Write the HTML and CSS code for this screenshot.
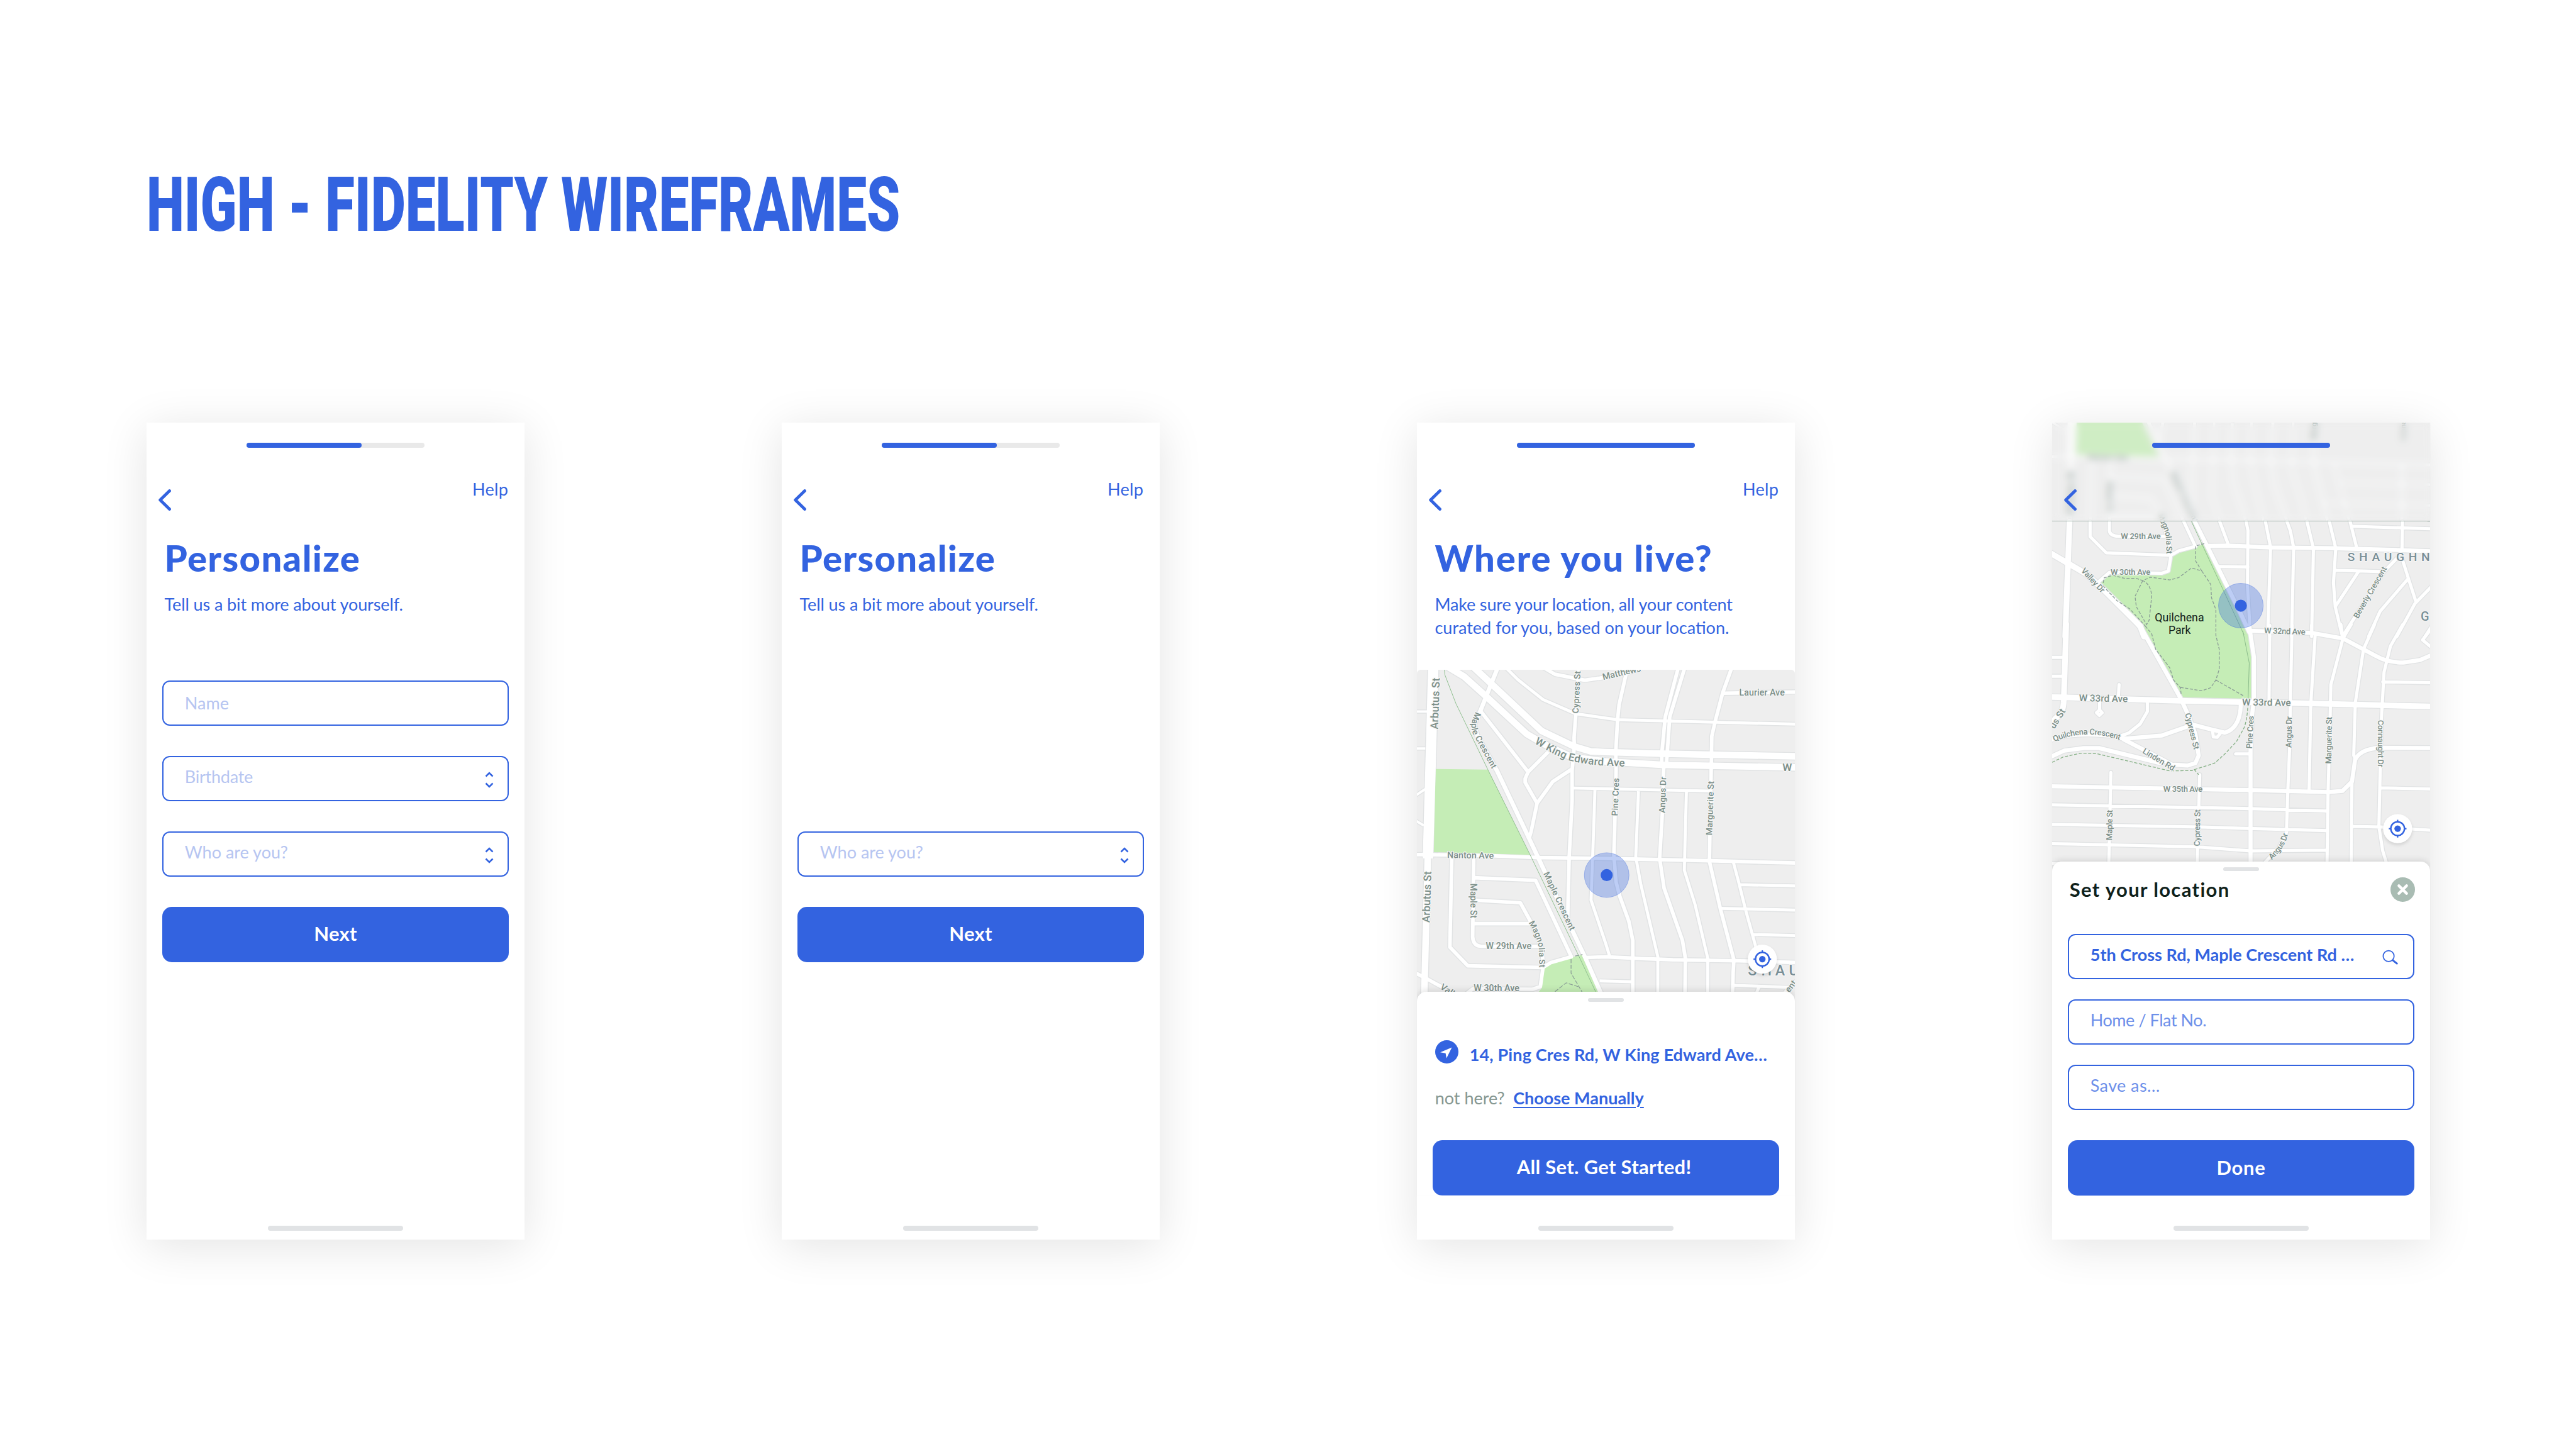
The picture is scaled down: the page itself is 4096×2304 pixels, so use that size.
FILE: index.html
```html
<!DOCTYPE html>
<html lang="en">
<head>
<meta charset="utf-8">
<title>High - Fidelity Wireframes</title>
<link rel="stylesheet" href="styles.css">
</head>
<body>
<svg class="defs" aria-hidden="true">
  <defs>
    <symbol id="back" viewBox="0 0 20 34"><path d="M17.500 2.500L2.700 17L17.500 31.500" fill="none" stroke="#3363e0" stroke-width="4.800" stroke-linecap="round" stroke-linejoin="round"/></symbol>
    <symbol id="updown" viewBox="0 0 14 26"><path d="M1.500 7.500L7 2L12.500 7.500M1.500 18.500L7 24L12.500 18.500" fill="none" stroke="#3363e0" stroke-width="2.600"/></symbol>
    <g id="locate">
      <circle class="locate-disc" r="32.500"/>
      <circle r="15.300" fill="none" stroke="#3363e0" stroke-width="3.400"/>
      <circle r="7.300" fill="#3363e0"/>
      <path d="M0-19.800v5M0 19.800v-5M-19.800 0h5M19.800 0h-5" stroke="#3363e0" stroke-width="3"/>
    </g>
    <g id="pin">
      <circle r="50" fill="#3363e0" fill-opacity=".32" stroke="#3363e0" stroke-opacity=".5" stroke-width="1"/>
      <circle r="13.500" fill="#3363e0"/>
    </g>
    <g id="north-roads">
      <path class="w70" d="M134 0L98 1290"/>
      <path class="w44" d="M97 1270L72 2260M390-5L525 120L860 435L1080 540L1190 572L1290 577L1680 588L2900 612M190-20L340 70L490 205L760 455L880 525L1060 610L1290 640L1680 663L2900 686"/>
      <path class="w28" d="M570 0L450 300L408 390L430 470L560 700L750 1100L835 1280L900 1420L1060 1760L1155 1960L1270 2220"/>
      <path class="w24" d="M450 300L770 710L905 575M770 710L750 755V780L830 920L790 1110L775 1160M830 920L935 775L1065 690M840-10L950 55L1150 95L1290 75L1530 20M1110 0L1090 320L1078 480L1080 540L1065 700V900L1045 1290L1035 1700"/>
      <path class="w24" d="M1430 40L1380 260L1370 360L1358 570L1360 700L1350 1110L1345 1270L1360 1450L1385 1545L1445 1710L1472 1840V2240M1780 0L1690 340L1668 570L1665 650M1824 0L1720 340L1704 570L1698 650M1680 670L1677 740L1672 960L1652 1290L1682 1490L1805 1840L1825 1960L1822 2240M2140 0L2075 180L2025 370L2002 470L2000 600L1990 1080L1986 1310L2060 1630L2150 1970L2145 2060L2140 2240"/>
      <path class="w24" d="M2080 182L2900 168M-60 1265L100 1265L520 1272L850 1285L1290 1290L1420 1293L1990 1306L2900 1329M1160 1955L1290 1950L1480 1960L1740 1970L2190 1977L2900 1998M258 1280L245 1885L365 2010L870 2022M405 1280L398 1820Q402 1876 455 1880H850M405 1420L820 1437L1060 1950L920 1990L870 2022L852 2150L800 2168L400 2165L340 2210M405 1570L718 1588L790 1720L865 1900L870 2022M400 1727L790 1728M-60 2020L95 2100L240 2180M2673 1320V2000"/>
      <path class="w20" d="M620 10L700 90L870 225L1090 320L1370 360L2900 398M1510 840L1492 1280L1525 1460L1640 1950V2240M1832 840L1825 1080L1818 1370L1890 1600L1975 1960V2240M1218 830L1210 1080L1192 1570L1290 1860L1318 1950M1065 818L1990 838M2145 1310L2180 1440L2230 1640L2310 1930M2185 1466L2900 1482M2060 1625L2900 1645M2280 1800L2900 1818M1250 2112L1470 2118M2150 2142L2515 2155M2320 2150L2290 2220M2600 2080L2490 2190"/>
      <path class="w16" d="M-60 305H95M-60 553H80M-60 918L80 825M-60 990L70 1070"/>
    </g>
    <g id="north-labels" class="labels">
      <text font-size="72" transform="translate(165 425) rotate(-88)" textLength="345">Arbutus St</text>
      <text font-size="72" transform="translate(109 1722) rotate(-88)" textLength="345">Arbutus St</text>
      <path id="lp1" d="M418 305C390 370 380 400 400 455L535 705" fill="none"/>
      <text font-size="58"><textPath href="#lp1" textLength="425">Maple Crescent</textPath></text>
      <text font-size="58" transform="translate(872 1392) rotate(65)" textLength="425">Maple Crescent</text>
      <path id="lp2" d="M812 518Q950 600 1050 635Q1180 665 1290 668L1440 675" fill="none"/>
      <text font-size="71"><textPath href="#lp2" textLength="636">W King Edward Ave</textPath></text>
      <text font-size="58" transform="translate(1107 318) rotate(-87)" textLength="284">Cypress St</text>
      <text font-size="60" transform="translate(1274 93) rotate(-13)" textLength="262">Matthews</text>
      <text font-size="60" x="2186" y="198" textLength="305">Laurier Ave</text>
      <text font-size="58" transform="translate(1371 1006) rotate(-88)" textLength="255">Pine Cres</text>
      <text font-size="58" transform="translate(1688 986) rotate(-88)" textLength="243">Angus Dr</text>
      <text font-size="58" transform="translate(2004 1135) rotate(-88)" textLength="363">Marguerite St</text>
      <text font-size="72" x="2476" y="702">W</text>
      <text font-size="60" transform="translate(227 1287) rotate(1)" textLength="312">Nanton Ave</text>
      <text font-size="58" transform="translate(384 1458) rotate(90)" textLength="234">Maple St</text>
      <path id="lp3" d="M774 1722Q835 1830 841 1890L846 2030" fill="none"/>
      <text font-size="56"><textPath href="#lp3" textLength="314">Magnolia St</textPath></text>
      <text font-size="60" x="486" y="1900" textLength="306">W 29th Ave</text>
      <text font-size="60" x="405" y="2180" textLength="306">W 30th Ave</text>
      <text font-size="60" transform="translate(176 2162) rotate(34)">Valley Dr</text>
      <text font-size="58" transform="translate(2522 2192) rotate(-52)">ent</text>
      <text class="district" font-size="98" x="2244 2334 2428 2520" y="2075">SHAU</text>
    </g>
    <g id="south-a">
      <path class="p9" d="M115 739L105 1190L98 1510M40 950L110 1020L180 1090L250 1200L390 1440L405 1510"/>
      <path class="p7" d="M603 739L650 900L780 1350L815 1480M655 902L730 900L900 912L1150 918L1400 930L1530 938"/>
      <path class="p5" d="M195 739V840L258 948L510 965M270 739V800Q272 835 305 838H500M477 739L505 900L508 960M560 739L605 905L540 935L510 965L500 1070L475 1085L270 1080L230 1140M700 739L735 900M803 739L810 800L808 1170L818 1460M878 739L898 910L888 1440L895 1510M962 739L975 800L988 915L980 1510M1040 739L1065 920L1058 1510M1127 739L1152 918L1143 1150L1150 1310L1178 1510M1208 739L1235 925M1215 770L1530 788M1412 739L1410 930M700 1040L810 1043M1152 1065L1340 1075M1240 1075L1150 1310M1390 985L1340 1075L1178 1510M1410 985L1435 1120L1465 1280M1435 1120L1325 1340L1280 1510M1530 1165L1460 1290L1390 1510M1530 1430L1500 1510"/>
    </g>
    <g id="south-b">
      <path class="p9" d="M102-15L92 500Q90 560 60 600L30 660M40 460L540 485L830 495L1060 502L1530 522"/>
      <path class="p7" d="M370-30L400 30L548 470L575 570L605 700L618 840L605 890L575 905L525 900M815 30L1060 45L1180 80L1310 195Q1350 235 1415 237L1480 220L1530 185M815 0L833 200V480L825 590L820 800V1540M310 728L340 730L475 710L595 640L670 672L720 692Q780 660 782 510M40 850L95 808L170 792H230L470 890M325 735L400 800L520 905M40 740Q130 680 310 718M1230 860Q1250 800 1320 790L1530 792M1228 860L1215 1010L1178 1070L1125 1078M40 1040L820 1065L1125 1078"/>
      <path class="p5" d="M40 203H95M40 325H90M895-5L892 480M982-5L975 500L972 800L965 1080L960 1340L930 1440L870 1545M1058-5V40M1072 50L1055 500L1048 1060M1172-10L1180 80M1212-10L1180 80L1133 380L1130 600L1122 1080L1118 1540M1303-10L1260 150L1228 500L1222 840L1228 860M1413-10L1365 130L1340 300L1330 600L1320 1300L1335 1460L1350 1540M1215 1010L1212 1540M1530 5L1490 90L1530 145M1335 362L1530 368M1325 1050L1530 1058M1215 1300L1330 1305L1530 1326M308 380L305 460M232 490V545L220 562L231 580L242 562L232 545M418 490V555L390 635L345 695L310 715M672 680L675 720L690 722L705 690M762 830H820M40 1160L820 1185L1115 1200M40 1287L630 1305L1118 1328M40 1412L610 1433L820 1460L1118 1455M276 950L268 1540M622 965L612 1540M40 1545L70 1540"/>
    </g>
  </defs>
</svg>

<main class="board">
  <h1 class="board-title"><span>HIGH - FIDELITY WIREFRAMES</span></h1>
  <div class="phones">

    <section class="phone">
      <header class="top">
        <div class="progress"><i class="done partial"></i></div>
        <nav class="nav"><svg class="back"><use href="#back"/></svg><span class="help">Help</span></nav>
      </header>
      <h2 class="title personalize">Personalize</h2>
      <p class="lead tell">Tell us a bit more about yourself.</p>
      <form class="form form-full">
        <div class="field faint low"><span>Name</span></div>
        <div class="field faint"><span class="f-birth">Birthdate</span><svg class="updown"><use href="#updown"/></svg></div>
        <div class="field faint"><span>Who are you?</span><svg class="updown"><use href="#updown"/></svg></div>
        <div class="button"><span>Next</span></div>
      </form>
      <div class="home"></div>
    </section>

    <section class="phone">
      <header class="top">
        <div class="progress"><i class="done partial"></i></div>
        <nav class="nav"><svg class="back"><use href="#back"/></svg><span class="help">Help</span></nav>
      </header>
      <h2 class="title personalize">Personalize</h2>
      <p class="lead tell">Tell us a bit more about yourself.</p>
      <form class="form form-short">
        <div class="field faint"><span>Who are you?</span><svg class="updown"><use href="#updown"/></svg></div>
        <div class="button"><span>Next</span></div>
      </form>
      <div class="home"></div>
    </section>

    <section class="phone">
      <header class="top">
        <div class="progress"><i class="done"></i></div>
        <nav class="nav"><svg class="back"><use href="#back"/></svg><span class="help">Help</span></nav>
      </header>
      <h2 class="title where">Where you live?</h2>
      <p class="lead"><span class="l1">Make sure your location, all your content</span><br><span>curated for you, based on your location.</span></p>
      <svg class="map map-north" viewBox="24 25 2538 2223">
        <rect x="0" y="0" width="2600" height="2260" fill="#eee"/>
        <use href="#north-roads" class="casing-u"/>
        <path class="park" d="M150 690L500 695L783 1266L137 1248ZM1070 1952L1130 1938L1270 2260H780L862 2160L880 2020L920 1998Z"/>
        <use href="#north-roads" class="road-u"/>
        <path class="rail" stroke-width="4" d="M208 25L212 60L285 250L500 695L795 1290L1110 1945L1235 2210"/>
        <path class="trail" stroke-width="5" stroke-dasharray="28 10" d="M1058 1965V2060L1140 2200M950 2184L1025 2125L1105 2150M1085 1945L1135 1935"/>
        <use href="#north-labels"/>
        <use href="#pin" transform="translate(1297 1402) scale(3)"/>
        <use href="#locate" transform="translate(2341 1966) scale(3)"/>
      </svg>
      <div class="sheet sheet-place">
        <div class="handle"></div>
        <div class="place">
          <svg class="arrow" viewBox="0 0 52 52"><circle cx="26" cy="26" r="26" fill="#3363e0"/><path d="M37.300 16L11.400 27L23.300 29L25.300 40.500Z" fill="#fff"/></svg>
          <span class="addr">14, Ping Cres Rd, W King Edward Ave…</span>
        </div>
        <div class="manual"><span class="not">not here?</span><a class="choose">Choose Manually</a></div>
        <div class="button"><span class="b-all">All Set. Get Started!</span></div>
      </div>
      <div class="home"></div>
    </section>

    <section class="phone">
      <svg class="map map-south" viewBox="4587 945 846 1002">
        <rect x="4580" y="940" width="860" height="1020" fill="#eee"/>
        <clipPath id="upper"><rect x="4587" y="945" width="846" height="221"/></clipPath>
        <g clip-path="url(#upper)">
          <g transform="translate(4601.100 657.800) scale(.2873)">
            <use href="#north-roads" class="casing-u"/>
            <path class="park" d="M150 690L500 695L783 1266L137 1248Z"/>
            <use href="#north-roads" class="road-u"/>
            <use href="#north-labels"/>
            <text class="labels" font-size="54" transform="translate(2700 1140) rotate(-90)">Connaught</text>
            <text class="labels" font-size="98" x="2850" y="1840">GR</text>
          </g>
        </g>
        <g transform="translate(4560 920) scale(.574 .33333)"><path class="park" d="M605 910L645 885L805 1440L830 1640L828 1936L545 1917L390 1440L235 1150L265 1100L480 1095L503 1075L513 968L545 940Z"/></g>
        <g class="casing-p">
          <use href="#south-a" transform="translate(4560 920) scale(.574 .33333)"/>
          <use href="#south-b" transform="translate(4560 1400) scale(.574 .34439)"/>
        </g>
        <g class="road-p">
          <use href="#south-a" transform="translate(4560 920) scale(.574 .33333)"/>
          <use href="#south-b" transform="translate(4560 1400) scale(.574 .34439)"/>
        </g>
        <g transform="translate(4560 920) scale(.574 .33333)">
          <path class="rail thin" d="M590 739L795 1500"/>
          <path class="trail thin" d="M605 905V1000L630 1070L590 1050L540 1115L505 1130L430 1112L400 1135L375 1120L330 1120L285 1100L250 1115L245 1160M640 887L610 900M630 1070L665 1160L668 1250L685 1330V1440M400 1135L370 1240L375 1310L415 1430L425 1400L435 1240Q432 1160 400 1135M245 1170L300 1270L350 1325L410 1440"/>
        </g>
        <g transform="translate(4560 1400) scale(.574 .34439)">
          <path class="rail thin" d="M790 30L815 240L810 500"/>
          <path class="trail thin" d="M410 0L435 50L450 150L505 270L520 350L547 400L550 450M547 398L630 420L665 400L685 350L698 280V150L685 60V0M685 350L795 455"/>
          <path class="trail green thin" d="M810 500Q808 600 795 660L765 750L720 830L680 890L590 938L505 940L220 828L160 825L90 850L40 890M600 930L618 965"/>
        </g>
        <g class="labels small">
          <text x="4740.800" y="1205" textLength="89">W 29th Ave</text>
          <text x="4717.800" y="1285" textLength="89">W 30th Ave</text>
          <text transform="translate(5061 1416) rotate(2)" textLength="92">W 32nd Ave</text>
          <text transform="translate(4651 1277) rotate(47)" textLength="68">Valley Dr</text>
          <clipPath id="lower"><rect x="4587" y="1167" width="846" height="780"/></clipPath>
          <path id="lp4" d="M4820 1150Q4844 1190 4842 1215L4843 1248" fill="none"/>
          <g clip-path="url(#lower)"><text><textPath href="#lp4" textLength="93">Magnolia St</textPath></text></g>
          <text transform="translate(5271 1384) rotate(-60)" textLength="130">Beverly Crescent</text>
          <text font-size="21.500" transform="translate(4647 1568) rotate(1)" textLength="109">W 33rd Ave</text>
          <text font-size="21.500" transform="translate(5011.700 1577) rotate(1)" textLength="109">W 33rd Ave</text>
          <text font-size="21" transform="translate(4592 1631) rotate(-58)" textLength="48">us St</text>
          <path id="lp5" d="M4592 1659Q4660 1627 4742 1656" fill="none"/>
          <text><textPath href="#lp5" textLength="150">Quilchena Crescent</textPath></text>
          <text transform="translate(4788 1683) rotate(31)" textLength="80">Linden Rd</text>
          <text transform="translate(4884 1596) rotate(76)" textLength="83">Cypress St</text>
          <text transform="translate(5034 1674) rotate(-87)" textLength="73">Pine Cres</text>
          <text transform="translate(5122 1672) rotate(-89)" textLength="70">Angus Dr</text>
          <text transform="translate(5211 1708) rotate(-89)" textLength="105">Marguerite St</text>
          <text transform="translate(5316 1610) rotate(90)" textLength="106">Connaught Dr</text>
          <text x="4835.500" y="1770" textLength="88">W 35th Ave</text>
          <text transform="translate(4721 1879) rotate(-89)" textLength="68">Maple St</text>
          <text transform="translate(4917 1892) rotate(-89)" textLength="82">Cypress St</text>
          <path id="lp6" d="M5078 1923Q5112 1893 5116 1855" fill="none"/>
          <text><textPath href="#lp6" textLength="70">Angus Dr</textPath></text>
          <text class="district" font-size="27" x="5247.700" y="1255" textLength="184">SHAUGHN</text>
          <text class="district" font-size="28" x="5411" y="1388">G</text>
        </g>
        <g class="park-name" text-anchor="middle">
          <text x="4871.700" y="1390" textLength="110">Quilchena</text>
          <text x="4872" y="1417" textLength="50">Park</text>
        </g>
        <use href="#pin" transform="translate(5009 1354.300)"/>
        <use href="#locate" transform="translate(5359.600 1852.900)"/>
      </svg>
      <header class="top top-over">
        <div class="progress"><i class="done"></i></div>
        <nav class="nav"><svg class="back"><use href="#back"/></svg></nav>
      </header>
      <div class="sheet sheet-form">
        <div class="handle"></div>
        <div class="sheet-head">
          <h3 class="set">Set your location</h3>
          <svg class="close" viewBox="0 0 54 54"><circle cx="27" cy="27" r="27" fill="#a9bcb3"/><path d="M18.500 18.500l17 17M35.500 18.500l-17 17" stroke="#fff" stroke-width="6" stroke-linecap="round"/></svg>
        </div>
        <div class="stack">
          <div class="field strong"><span>5th Cross Rd, Maple Crescent Rd …</span><svg class="search" viewBox="0 0 36 34"><circle cx="14.500" cy="14.500" r="12.500" fill="none" stroke="#3363e0" stroke-width="2.500"/><path d="M24 24L33.500 31.500" stroke="#3363e0" stroke-width="4.200" stroke-linecap="round"/></svg></div>
          <div class="field mid"><span class="f-home">Home / Flat No.</span></div>
          <div class="field mid"><span class="f-save">Save as…</span></div>
        </div>
        <div class="button"><span class="b-done">Done</span></div>
      </div>
      <div class="home"></div>
    </section>
  </div>
</main>
</body>
</html>
```
FILE: styles.css
```css
* { box-sizing: border-box; }
body {
  margin: 0;
  width: 4096px;
  height: 2304px;
  overflow: hidden;
  background: #fff;
  color: #3363e0;
  font-family: Lato, "Open Sans", sans-serif;
  font-size: 27px;
  line-height: 36px;
}
.defs { position: absolute; width: 0; height: 0; }
.board { padding: 256px 0 0 232.800px; }
.board-title {
  margin: 0;
  height: 416px;
  font: 900 120px/140px Roboto, sans-serif;
  white-space: nowrap;
}
.board-title span { display: inline-block; transform-origin: 0 0; transform: scaleX(.71); }
.phones { display: flex; gap: 408.400px; }

.phone {
  position: relative;
  display: flex;
  flex-direction: column;
  flex: none;
  width: 601.600px;
  height: 1299px;
  background: #fff;
  box-shadow: 0 10px 68px rgba(0, 0, 0, .11);
}
.phone span, .phone h2, .phone h3, .phone p, .choose { white-space: nowrap; }

/* Top bar */
.top { height: 157.400px; padding-top: 32px; flex: none; }
.progress { width: 283.500px; height: 8px; margin: 0 auto; border-radius: 4px; background: #e9e9e9; }
.done { display: block; height: 8px; border-radius: 4px; background: #3363e0; }
.done.partial { width: 183px; }
.nav { display: flex; justify-content: space-between; align-items: flex-start; padding: 47px 26.200px 0 19.700px; }
.help { padding-top: 1px; letter-spacing: .3px; }
.back { width: 20px; height: 34px; margin-top: 19px; }
.top-over {
  position: absolute;
  inset: 0 0 auto 0;
  background: rgba(238, 238, 238, .25);
  backdrop-filter: blur(6px);
  border-bottom: 1px solid #9fb3aa;
}

.title { margin: 25.500px 0 0 28.700px; font-size: 58px; line-height: 64px; font-weight: 900; }
.personalize { letter-spacing: 1.350px; }
.where { letter-spacing: 1.750px; }
.lead { margin: 24.500px 0 0 28.700px; line-height: 36.800px; }
.tell { letter-spacing: -.1px; }
.l1 { letter-spacing: -.16px; }

/* Forms */
.form { display: flex; flex-direction: column; gap: 48px; padding: 0 25.500px; }
.form-full { margin-top: 101.400px; }
.form-short { margin-top: 341.400px; }
.field {
  display: flex;
  justify-content: space-between;
  align-items: flex-start;
  height: 72px;
  padding: 13px 22px 0 33.500px;
  border: 2px solid #3363e0;
  border-radius: 12px;
}
.field.low { padding-top: 16px; }
.faint { color: #b6c5f1; }
.f-birth { letter-spacing: -.25px; }
.mid { color: #6d90ea; }
.f-home { letter-spacing: -.45px; }
.f-save { letter-spacing: .4px; }
.strong { font-weight: 700; }
.updown { width: 14px; height: 26px; margin-top: 10px; }
.search { width: 25px; height: 24px; margin: 10px 1.500px 0 0; }
.button {
  display: flex;
  justify-content: center;
  height: 88.200px;
  padding-top: 22.800px;
  border-radius: 15px;
  background: #3363e0;
  color: #fff;
  font-size: 31px;
  line-height: 40px;
  font-weight: 700;
  letter-spacing: .3px;
}
.b-all { margin-right: 6px; }
.b-done { letter-spacing: .7px; }
.home { flex: none; width: 215px; height: 8.400px; margin: auto auto 14px; border-radius: 4px; background: #e1e3e5; }

/* Maps */
.map { display: block; flex: none; width: 601.600px; }
.map-north { height: 527px; margin-top: 48.500px; border-radius: 6px 6px 0 0; }
.map-south { height: 712.500px; }
.w70 { --w: 70px; } .w44 { --w: 44px; } .w28 { --w: 28px; } .w24 { --w: 24px; } .w20 { --w: 20px; } .w16 { --w: 16px; }
.p9 { --w: 9px; } .p7 { --w: 6.500px; } .p5 { --w: 5px; }
.casing-u { --c: 12px; stroke: #e1e3e4; }
.casing-p { --c: 2.600px; stroke: #e1e3e4; }
.road-u, .road-p { --c: 0px; stroke: #fff; }
#north-roads path, #south-a path, #south-b path {
  fill: none;
  stroke-width: calc(var(--w) + var(--c));
  stroke-linejoin: round;
}
#south-a path, #south-b path { vector-effect: non-scaling-stroke; stroke-linecap: round; }
.park { fill: #c5edb6; }
.rail { fill: none; stroke: #8dbd8d; }
.trail { fill: none; stroke: #8a9c96; }
.trail.green { stroke: #86b086; }
.thin { vector-effect: non-scaling-stroke; stroke-width: 1.300px; }
.rail.thin { stroke-width: 1px; }
.trail.thin { stroke-dasharray: 5 2.500; }
.labels text, text.labels {
  font-family: Roboto, sans-serif;
  font-weight: 500;
  fill: #7c8f89;
  stroke: #f7f7f7;
  stroke-width: 10px;
  paint-order: stroke;
  stroke-linejoin: round;
}
.labels.small { font-size: 18.300px; }
.labels.small text { stroke-width: 3px; }
.labels text.district { fill: #788e96; }
.park-name { font: 400 25px Roboto, sans-serif; fill: #14231c; }
.locate-disc { fill: #fff; filter: drop-shadow(0 4px 4px rgba(0, 0, 0, .12)); }

/* Bottom sheets */
.sheet {
  position: relative;
  display: flex;
  flex-direction: column;
  margin-top: -15px;
  padding: 9.300px 25.500px 0;
  border-radius: 15px 15px 0 0;
  background: #fff;
  box-shadow: 0 -3px 10px rgba(0, 0, 0, .1);
  clip-path: inset(-20px 0 0 0);
}
.handle { width: 57.500px; height: 6.700px; margin: 0 auto; border-radius: 3px; background: #e1e3e5; }
.place { display: flex; align-items: flex-start; height: 40px; margin: 60.500px 0 0 3.400px; font-weight: 700; }
.arrow { width: 37px; height: 37px; }
.addr { margin: 5.500px 0 0 18px; letter-spacing: .15px; }
.manual { display: flex; height: 36px; margin: 33.700px 0 0 3.400px; }
.not { color: #869791; }
.choose { margin-left: 13.500px; font-weight: 700; text-decoration: underline; text-decoration-thickness: 2px; text-underline-offset: 4px; }
.sheet-place .button { margin-top: 48.900px; }
.sheet-head { display: flex; justify-content: space-between; height: 40px; margin: 8.500px -1.500px 0 2.500px; }
.set { margin: 0; font-size: 31px; line-height: 40px; font-weight: 700; letter-spacing: 1.350px; color: #10211a; }
.close { width: 39px; height: 39px; margin-top: 1px; }
.stack { display: flex; flex-direction: column; gap: 31.800px; margin-top: 51px; }
.sheet-form .button { margin-top: 48.400px; }
```
